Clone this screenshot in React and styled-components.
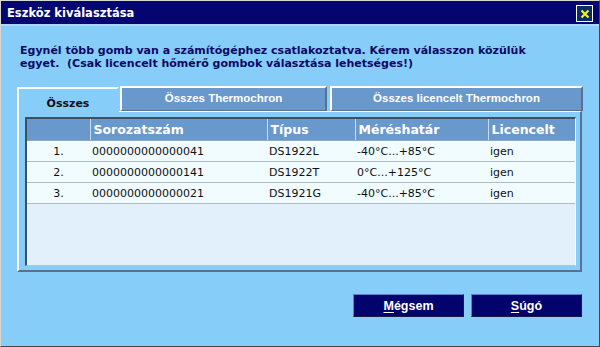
import styled, { createGlobalStyle } from "styled-components";

const GlobalStyle = createGlobalStyle`
  html, body {
    margin: 0;
    padding: 0;
    background: #87cdf9;
  }
`;

const Window = styled.div`
  width: 600px;
  height: 347px;
  box-sizing: border-box;
  display: flex;
  flex-direction: column;
  background: #87cdf9;
  border-left: 1px solid #d8d8d0;
  border-top: 1px solid #d8d8d0;
  border-right: 1px solid #404850;
  border-bottom: 1px solid #404850;
  font-family: "DejaVu Sans", Verdana, sans-serif;
`;

const TitleBar = styled.div`
  height: 23px;
  flex: none;
  display: flex;
  align-items: center;
  justify-content: space-between;
  padding: 0 6px 0 6px;
  background: #05056f;
  color: #fff;
  font-weight: bold;
  font-size: 11.5px;
  border-bottom: 2px solid #aad8f8;
`;

const CloseButton = styled.div`
  width: 15px;
  height: 15px;
  border: 1px solid #ffffff;
  background: #0a2a6a;
  display: flex;
  align-items: center;
  justify-content: center;
  margin-top: 2px;
`;

const Message = styled.p`
  margin: 18px 0 0 19px;
  color: #0a0a64;
  font-weight: bold;
  font-size: 11px;
  line-height: 13px;
  white-space: pre;
`;

const TabRow = styled.div`
  display: flex;
  align-items: flex-end;
  margin: 16px 0 0 16px;
  height: 25px;
  position: relative;
  z-index: 1;
`;

const Tab = styled.div`
  box-sizing: border-box;
  width: ${(p) => p.$w}px;
  height: 25px;
  margin-right: ${(p) => (p.$active ? 1 : 3)}px;
  display: flex;
  align-items: center;
  justify-content: center;
  font-weight: bold;
  border-top: 2px solid #ffffff;
  border-left: 2px solid #ffffff;
  border-right: 2px solid #5a7090;
  ${(p) =>
    p.$active
      ? `
    background: #87cdf9;
    color: #101010;
    font-size: 11px;
    padding-top: 5px;
    border-right-color: #87cdf9;
    margin-bottom: -1px;
  `
      : `
    background: #6898cc;
    color: #fff;
    font-family: "Liberation Sans", Arial, sans-serif;
    font-size: 11.5px;
    border-bottom: 1px solid #5a7090;
    padding-bottom: 2px;
  `}
`;

const Panel = styled.div`
  margin: 0 17px 0 16px;
  height: 161px;
  box-sizing: border-box;
  padding: 5px 4px 4px 6px;
  border-top: 1px solid #ffffff;
  border-left: 2px solid #ffffff;
  border-right: 2px solid #5a7090;
  border-bottom: 2px solid #5a7090;
`;

const TableBox = styled.div`
  height: 100%;
  box-sizing: border-box;
  background: #e1f0fa;
  border-top: 2px solid #3c5064;
  border-left: 2px solid #3c5064;
  border-right: 1px solid #ffffff;
  border-bottom: 1px solid #b8c4c8;
  overflow: hidden;
`;

const Grid = styled.table`
  border-collapse: collapse;
  width: 551px;
  table-layout: fixed;
`;

const Th = styled.th`
  height: 21px;
  padding: 0 0 0 3px;
  background: #6898cc;
  color: #fff;
  text-align: left;
  font-size: 12.5px;
  font-weight: bold;
  border-left: 1px solid #c8dcf0;
  border-bottom: 1px solid #90a8c0;
  &:first-child {
    border-left: none;
  }
`;

const Td = styled.td`
  height: 20px;
  padding: 0 0 0 ${(p) => (p.$center ? 0 : 2)}px;
  text-align: ${(p) => (p.$center ? "center" : "left")};
  background: #f0fcff;
  color: #101010;
  font-size: 11px;
  border-bottom: 1px solid #b0bcc0;
  white-space: nowrap;
`;

const ButtonRow = styled.div`
  display: flex;
  justify-content: flex-end;
  gap: 7px;
  margin: 22px 17px 0 0;
`;

const Button = styled.div`
  box-sizing: border-box;
  width: 111px;
  height: 23px;
  display: flex;
  align-items: center;
  justify-content: center;
  background: #03036e;
  color: #fff;
  font-family: "Liberation Sans", Arial, sans-serif;
  font-weight: bold;
  font-size: 12.5px;
  border-top: 1px solid #6a78d0;
  border-left: 1px solid #6a78d0;
  border-right: 1px solid #1a1a40;
  border-bottom: 1px solid #1a1a40;
  u {
    text-decoration-thickness: 1px;
    text-underline-offset: 2px;
  }
`;

const rows = [
  ["1.", "0000000000000041", "DS1922L", "-40°C...+85°C", "igen"],
  ["2.", "0000000000000141", "DS1922T", "0°C...+125°C", "igen"],
  ["3.", "0000000000000021", "DS1921G", "-40°C...+85°C", "igen"],
];

export default function App() {
  return (
    <>
      <GlobalStyle />
      <Window>
        <TitleBar>
          <span>Eszköz kiválasztása</span>
          <CloseButton>
            <svg width="10" height="10" viewBox="0 0 10 10">
              <path d="M1.5 1.5 L8.5 8.5 M8.5 1.5 L1.5 8.5" stroke="#f4f020" strokeWidth="2.2" />
            </svg>
          </CloseButton>
        </TitleBar>
        <Message>
          {"Egynél több gomb van a számítógéphez csatlakoztatva. Kérem válasszon közülük\negyet.  (Csak licencelt hőmérő gombok választása lehetséges!)"}
        </Message>
        <TabRow>
          <Tab $active $w={102}>Összes</Tab>
          <Tab $w={207}>Összes Thermochron</Tab>
          <Tab $w={253}>Összes licencelt Thermochron</Tab>
        </TabRow>
        <Panel>
          <TableBox>
            <Grid>
              <colgroup>
                <col style={{ width: 63 }} />
                <col style={{ width: 177 }} />
                <col style={{ width: 88 }} />
                <col style={{ width: 133 }} />
                <col style={{ width: 90 }} />
              </colgroup>
              <thead>
                <tr>
                  <Th></Th>
                  <Th>Sorozatszám</Th>
                  <Th>Típus</Th>
                  <Th>Méréshatár</Th>
                  <Th>Licencelt</Th>
                </tr>
              </thead>
              <tbody>
                {rows.map((r) => (
                  <tr key={r[0]}>
                    <Td $center>{r[0]}</Td>
                    <Td>{r[1]}</Td>
                    <Td>{r[2]}</Td>
                    <Td>{r[3]}</Td>
                    <Td>{r[4]}</Td>
                  </tr>
                ))}
              </tbody>
            </Grid>
          </TableBox>
        </Panel>
        <ButtonRow>
          <Button>
            <span><u>M</u>égsem</span>
          </Button>
          <Button>
            <span><u>S</u>úgó</span>
          </Button>
        </ButtonRow>
      </Window>
    </>
  );
}
